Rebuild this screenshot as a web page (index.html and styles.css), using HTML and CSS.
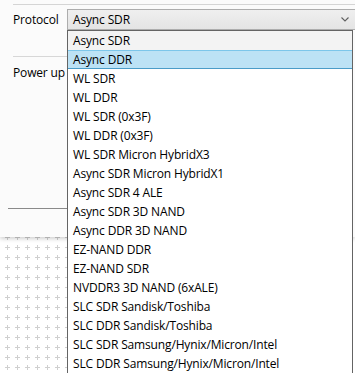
FILE: index.html
```html
<!DOCTYPE html>
<html lang="en">

<head>
    <meta charset="UTF-8" />
    <meta name="viewport" content="width=device-width, initial-scale=1.0" />
    <title>Protocol Settings</title>
    <link rel="stylesheet" href="styles.css">
</head>

<body>
    <!-- designer canvas grid behind the dialog -->
    <svg class="canvas-grid" width="100%" height="100%">
        <defs>
            <pattern id="plus" x="0" y="0" width="10" height="10" patternUnits="userSpaceOnUse">
                <path d="M5 7.5 H10 M7.5 5 V10" stroke="#cfcfcf" stroke-width="1" />
            </pattern>
        </defs>
        <rect width="100%" height="100%" fill="url(#plus)" />
    </svg>

    <div class="dialog">
        <div class="top-rule"></div>

        <div class="row protocol-row">
            <label class="field-label">Protocol</label>
            <div class="combo">
                <span class="combo-value">Async SDR</span>
                <svg class="chevron" width="8" height="5" viewBox="0 0 8 5">
                    <path d="M0.5 0.5 L4 4 L7.5 0.5" fill="none" stroke="#606060" stroke-width="1.1" />
                </svg>
            </div>
        </div>

        <div class="row-rule"></div>

        <div class="row power-row">
            <label class="field-label">Power up</label>
        </div>

        <div class="bottom-rule"></div>
    </div>

    <ul class="dropdown">
        <li class="item current">Async SDR</li>
        <li class="item selected">Async DDR</li>
        <li class="item">WL SDR</li>
        <li class="item">WL DDR</li>
        <li class="item">WL SDR (0x3F)</li>
        <li class="item">WL DDR (0x3F)</li>
        <li class="item">WL SDR Micron HybridX3</li>
        <li class="item">Async SDR Micron HybridX1</li>
        <li class="item">Async SDR 4 ALE</li>
        <li class="item">Async SDR 3D NAND</li>
        <li class="item">Async DDR 3D NAND</li>
        <li class="item">EZ-NAND DDR</li>
        <li class="item">EZ-NAND SDR</li>
        <li class="item">NVDDR3 3D NAND (6xALE)</li>
        <li class="item">SLC SDR Sandisk/Toshiba</li>
        <li class="item">SLC DDR Sandisk/Toshiba</li>
        <li class="item">SLC SDR Samsung/Hynix/Micron/Intel</li>
        <li class="item">SLC DDR Samsung/Hynix/Micron/Intel</li>
    </ul>
</body>

</html>
```

FILE: styles.css
```css
html,
body {
    height: 100%;
}

body {
    position: relative;
    margin: 0;
    font-family: "Open Sans", "Noto Sans", sans-serif;
    font-size: 12px;
    letter-spacing: -0.15px;
    color: #000;
    overflow: hidden;
    background-color: #fff;
}

.canvas-grid {
    position: absolute;
    top: 0;
    left: 0;
    z-index: 0;
}

.dialog {
    position: relative;
    z-index: 1;
    height: 237px;
    background-color: #fbfbfb;
    box-shadow: 0 2px 4px rgba(0, 0, 0, 0.18);
    overflow: hidden;
}

.top-rule {
    position: relative;
    top: 4px;
    margin-left: 13px;
    height: 1px;
    background-color: #d5d5d5;
}

.row {
    display: flex;
    align-items: center;
}

.protocol-row {
    margin-top: 8px;
}

.field-label {
    width: 54px;
    padding-left: 13px;
    line-height: 21px;
}

.combo {
    flex: 1;
    display: flex;
    align-items: center;
    justify-content: space-between;
    height: 19px;
    margin-right: -4px;
    padding: 0 9px 0 5px;
    border: 1px solid #adadad;
    background: linear-gradient(#efefef, #e4e4e4);
}

.chevron {
    display: block;
}

.row-rule {
    margin: 26px 0 0 13px;
    width: 54px;
    height: 1px;
    background-color: #d7d7d7;
}

.power-row {
    margin-top: 5px;
}

.bottom-rule {
    margin: 125px 0 0 8px;
    width: 59px;
    height: 1px;
    background-color: #8a8a8a;
}

.dropdown {
    position: absolute;
    z-index: 2;
    top: 30px;
    left: 67px;
    width: 284px;
    height: 360px;
    margin: 0;
    padding: 0;
    list-style: none;
    background-color: #fff;
    border: 1px solid #646464;
}

.item {
    height: 19px;
    line-height: 19px;
    padding-left: 5px;
    white-space: nowrap;
}

.item.current {
    background-color: #f3f3f3;
}

.item.selected {
    box-sizing: border-box;
    background-color: #bce2f5;
    border-top: 1px solid #7cc6ea;
    border-bottom: 1px solid #4a9cc8;
    line-height: 17px;
}
```
